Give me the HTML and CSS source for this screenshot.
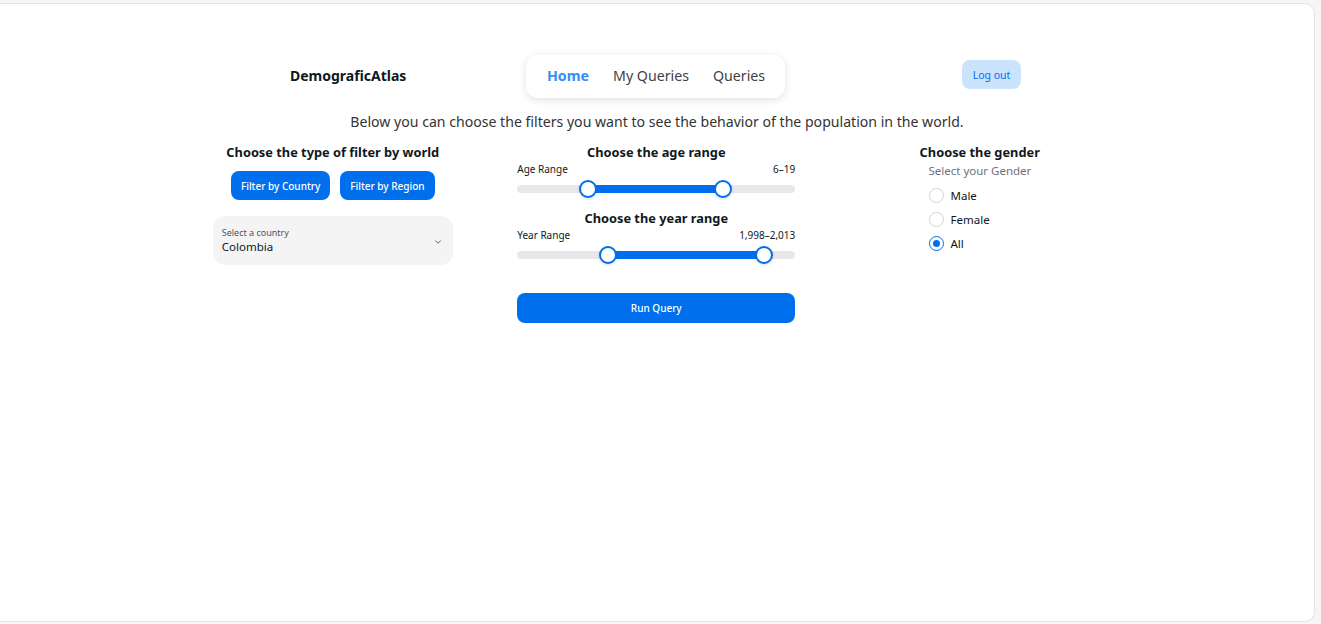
FILE: index.html
```html
<!DOCTYPE html>
<html lang="en">
<head>
<meta charset="utf-8">
<title>DemograficAtlas</title>
<link rel="stylesheet" href="styles.css">
</head>
<body>
<div class="card">
  <header class="header">
    <div class="brand">DemograficAtlas</div>
    <nav class="nav">
      <a class="nav-link active">Home</a>
      <a class="nav-link">My Queries</a>
      <a class="nav-link">Queries</a>
    </nav>
    <button class="logout">Log out</button>
  </header>

  <p class="intro">Below you can choose the filters you want to see the behavior of the population in the world.</p>

  <main class="grid">
    <section class="col">
      <h3 class="col-title">Choose the type of filter by world</h3>
      <div class="btn-row">
        <button class="btn">Filter by Country</button>
        <button class="btn">Filter by Region</button>
      </div>
      <div class="select">
        <div class="select-text">
          <span class="select-label">Select a country</span>
          <span class="select-value">Colombia</span>
        </div>
        <svg class="chev" width="10" height="10" viewBox="0 0 24 24" fill="none" stroke="#555" stroke-width="2.2" stroke-linecap="round" stroke-linejoin="round"><path d="M6 9l6 6 6-6"/></svg>
      </div>
    </section>

    <section class="col mid">
      <h3 class="col-title">Choose the age range</h3>
      <div class="slider-head"><span>Age Range</span><span>6–19</span></div>
      <div class="track">
        <div class="fill" style="left:25.5%;width:48.6%"></div>
        <span class="thumb" style="left:25.5%"></span>
        <span class="thumb" style="left:74.1%"></span>
      </div>
      <h3 class="col-title second">Choose the year range</h3>
      <div class="slider-head"><span>Year Range</span><span>1,998–2,013</span></div>
      <div class="track">
        <div class="fill" style="left:32.7%;width:56.1%"></div>
        <span class="thumb" style="left:32.7%"></span>
        <span class="thumb" style="left:88.8%"></span>
      </div>
      <button class="btn run">Run Query</button>
    </section>

    <section class="col right">
      <h3 class="col-title">Choose the gender</h3>
      <div class="radio-group">
        <div class="radio-label">Select your Gender</div>
        <label class="radio"><span class="dot"></span>Male</label>
        <label class="radio"><span class="dot"></span>Female</label>
        <label class="radio"><span class="dot checked"></span>All</label>
      </div>
    </section>
  </main>
</div>
</body>
</html>
```

FILE: styles.css
```css
* { box-sizing: border-box; }
html, body { margin: 0; padding: 0; }
body {
  background: #f6f6f6;
  font-family: "Noto Sans", "Open Sans", sans-serif;
  color: #11181c;
  height: 624px;
  overflow: hidden;
}
.card {
  margin: 3px 6px 0 0;
  height: 619px;
  background: #fff;
  border: 1px solid #e4e4e4;
  border-left: none;
  border-radius: 0 10px 10px 0;
  padding-top: 51px;
}
.header {
  display: flex;
  align-items: center;
  height: 43px;
  padding-left: 290px;
}
.brand {
  font-weight: 700;
  font-size: 14px;
  width: 117px;
  white-space: nowrap;
  margin-bottom: 2px;
}
.nav {
  margin-left: 119px;
  height: 43px;
  width: 259px;
  display: flex;
  align-items: center;
  gap: 24px;
  padding: 0 0 3px 21px;
  background: #fff;
  border-radius: 12px;
  box-shadow: 0 2px 8px rgba(0,0,0,0.12);
}
.nav-link {
  font-size: 14.2px;
  color: #3f3f46;
  cursor: pointer;
}
.nav-link.active {
  color: #338ef7;
  font-weight: 700;
}
.logout {
  margin-left: 177px;
  margin-bottom: 4px;
  height: 29px;
  width: 59px;
  border: none;
  border-radius: 8px;
  background: #cce3fd;
  color: #006fee;
  font-family: inherit;
  font-size: 10.5px;
  padding: 0;
}
.intro {
  margin: 14px 0 0;
  text-align: center;
  font-size: 14.1px;
  line-height: 20px;
  color: #333;
}
.grid {
  margin-top: 11px;
  display: grid;
  grid-template-columns: 323.5px 323.5px 323.5px;
  padding-left: 171px;
}
.col {
  display: flex;
  flex-direction: column;
  align-items: center;
}
.col-title {
  margin: 0;
  font-size: 12.8px;
  line-height: 18px;
  font-weight: 700;
  white-space: nowrap;
}
.btn-row {
  display: flex;
  gap: 10px;
  margin-top: 10px;
}
.btn {
  height: 29px;
  border: none;
  border-radius: 8px;
  background: #006fee;
  color: #fff;
  font-family: inherit;
  font-size: 10px;
  font-weight: 500;
  padding: 0 10px;
}
.select {
  margin-top: 16px;
  width: 240px;
  height: 49px;
  border-radius: 12px;
  background: #f4f4f5;
  display: flex;
  align-items: center;
  justify-content: space-between;
  padding: 0 10px 0 9px;
}
.select-text {
  display: flex;
  flex-direction: column;
}
.select-label {
  font-size: 9px;
  line-height: 12px;
  color: #52525b;
}
.select-value {
  font-size: 11.5px;
  line-height: 16px;
  color: #11181c;
}
.chev { margin-top: 2px; }
.mid { align-items: stretch; width: 278px; justify-self: center; }
.mid .col-title { text-align: center; }
.slider-head {
  display: flex;
  justify-content: space-between;
  font-size: 10px;
  line-height: 14px;
  color: #11181c;
  margin-top: 1px;
}
.track {
  position: relative;
  height: 8px;
  margin-top: 9px;
  margin-bottom: 5px;
  border-radius: 4px;
  background: #e8e8ea;
}
.fill {
  position: absolute;
  top: 0;
  bottom: 0;
  background: #006fee;
}
.thumb {
  position: absolute;
  top: 50%;
  width: 18px;
  height: 18px;
  margin: -9px 0 0 -9px;
  border-radius: 50%;
  background: #fff;
  border: 2px solid #006fee;
  box-shadow: 0 1px 3px rgba(0,0,0,0.15);
}
.second { margin-top: 11px; }
.run {
  margin-top: 29px;
  height: 30px;
  width: 100%;
}
.radio-group {
  align-self: flex-start;
  margin-left: 110.5px;
  display: flex;
  flex-direction: column;
  margin-top: 2px;
}
.radio-label {
  font-size: 11.5px;
  line-height: 16px;
  color: #71717a;
  margin-bottom: 4px;
}
.radio {
  display: flex;
  align-items: center;
  gap: 7px;
  height: 24px;
  font-size: 11.5px;
  color: #11181c;
}
.dot {
  width: 15px;
  height: 15px;
  border-radius: 50%;
  border: 1.5px solid #d4d4d8;
  display: flex;
  align-items: center;
  justify-content: center;
}
.dot.checked { border-color: #006fee; }
.dot.checked::after {
  content: "";
  width: 7px;
  height: 7px;
  border-radius: 50%;
  background: #006fee;
}
```
